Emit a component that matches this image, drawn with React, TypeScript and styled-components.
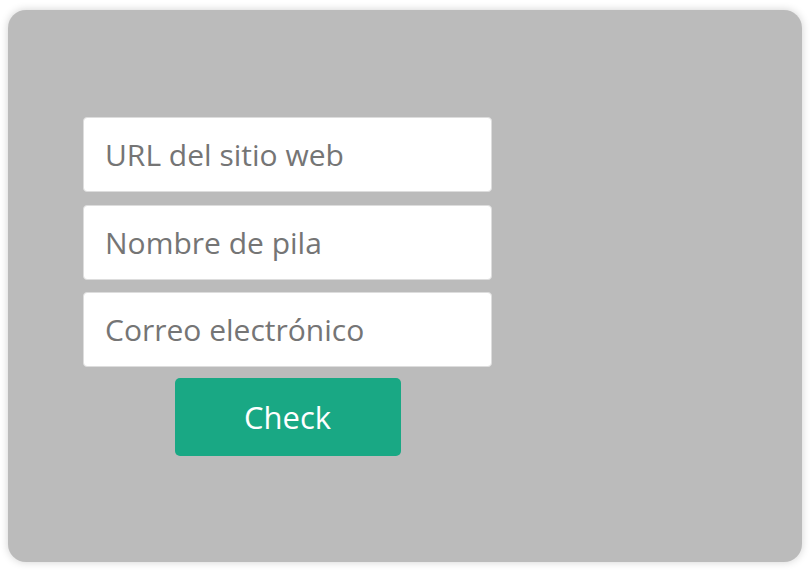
import styled, { createGlobalStyle } from "styled-components";

const GlobalStyles = createGlobalStyle`
  html, body {
    margin: 0;
    padding: 0;
    background: #ffffff;
  }
  body {
    font-family: "Open Sans", "Noto Sans", sans-serif;
  }
`;

const fields = ["URL del sitio web", "Nombre de pila", "Correo electrónico"];

function App(): JSX.Element {
  return (
    <Page>
      <GlobalStyles />
      <Card>
        <Form onSubmit={(e) => e.preventDefault()}>
          {fields.map((f) => (
            <Field key={f} type="text" placeholder={f} />
          ))}
          <CheckButton type="submit">Check</CheckButton>
        </Form>
      </Card>
    </Page>
  );
}

export default App;

const Page = styled.div`
  width: 810px;
  height: 570px;
  padding: 10px 8px 8px 8px;
  box-sizing: border-box;
`;

const Card = styled.div`
  width: 794px;
  height: 552px;
  box-sizing: border-box;
  background: #bbbbbb;
  border-radius: 18px;
  box-shadow: 0 0 8px rgba(0, 0, 0, 0.18);
  padding: 107px 0 0 75px;
`;

const Form = styled.form`
  width: 409px;
  display: flex;
  flex-direction: column;
  align-items: center;
  gap: 12.5px;
`;

const Field = styled.input`
  width: 100%;
  height: 75px;
  box-sizing: border-box;
  border: 1px solid #dddddd;
  border-radius: 4px;
  background: #ffffff;
  padding: 0 21px;
  font-family: "Open Sans", "Noto Sans", sans-serif;
  font-size: 30px;
  color: #333333;
  outline: none;

  &::placeholder {
    color: #757575;
  }
`;

const CheckButton = styled.button`
  width: 226px;
  height: 78px;
  margin-top: -2px;
  border: none;
  border-radius: 5px;
  background: #19a884;
  color: #ffffff;
  font-family: "Open Sans", "Noto Sans", sans-serif;
  font-size: 31px;
  cursor: pointer;
`;
